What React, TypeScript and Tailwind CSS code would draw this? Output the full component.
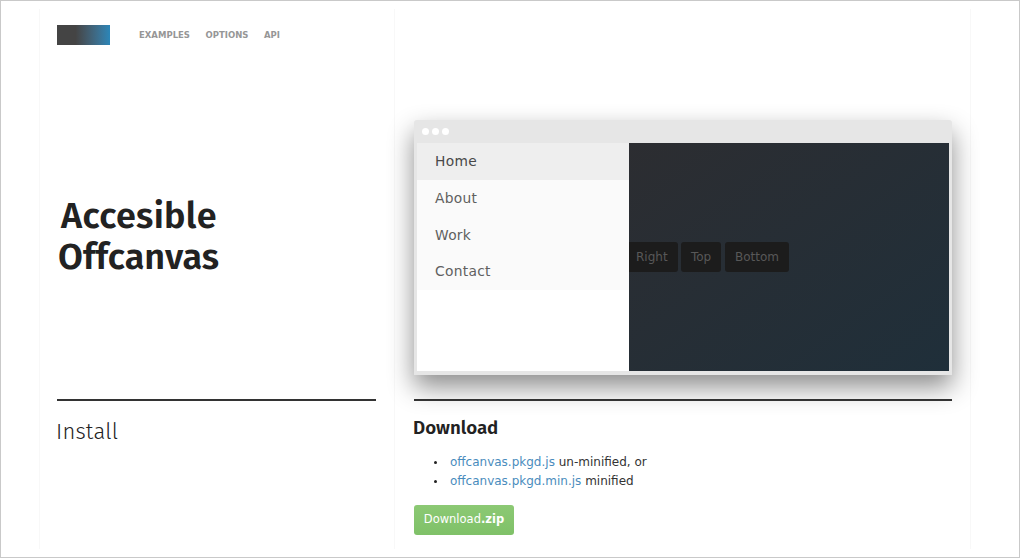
export default function App() {
  const body = { fontFamily: '"DejaVu Sans", sans-serif' };
  const head = { fontFamily: '"Fira Sans", "Noto Sans", "Open Sans", sans-serif' };
  return (
    <div className="w-[1020px] h-[558px] bg-white border border-[#c9c9c9] overflow-hidden" style={body}>
      <div className="ml-[38px] mt-[8px] w-[932px] h-[540px] flex border-x border-[#f8f8f8]">
        <div className="w-[355px] shrink-0 border-r border-[#f8f8f8] pl-[17px] pr-[18px] flex flex-col">
          <div className="flex items-center pt-[16px] h-[36px] shrink-0">
            <div className="w-[53px] h-[20px] bg-gradient-to-r from-[#444444] from-35% to-[#2a86b8]" />
            <div className="ml-[29px] mt-[1px] flex gap-[15.5px] text-[8.5px] font-bold text-[#969696]">
              <span>EXAMPLES</span>
              <span>OPTIONS</span>
              <span>API</span>
            </div>
          </div>
          <div className="flex-1 flex flex-col items-start justify-center pt-[30px]">
            <h1 className="text-[36px] leading-[41px] font-semibold text-[#222222]" style={head}>
              <span className="block ml-[4px] tracking-[0.3px]">Accesible</span>
              <span className="block ml-[1px]">Offcanvas</span>
            </h1>
          </div>
          <div className="border-t-2 border-[#333333] h-[150px] shrink-0 pt-[15px]">
            <h2 className="text-[22px] leading-[32px] -ml-[1px] font-light tracking-[0.2px] text-[#222222]" style={head}>Install</h2>
          </div>
        </div>
        <div className="flex-1 pl-[19px] pr-[18px] flex flex-col">
          <div className="mt-[111px] h-[255px] w-[538px] shrink-0 bg-[#e6e6e6] rounded-t-[3px] flex flex-col shadow-[0_12px_26px_rgba(0,0,0,0.45)]">
            <div className="h-[23px] flex items-center gap-[3px] pl-[8px] shrink-0">
              <span className="w-[7px] h-[7px] rounded-full bg-white" />
              <span className="w-[7px] h-[7px] rounded-full bg-white" />
              <span className="w-[7px] h-[7px] rounded-full bg-white" />
            </div>
            <div className="flex-1 flex mx-[3px] mb-[4px] overflow-hidden">
              <div className="w-[212px] bg-white shrink-0 relative z-10 text-[13.8px] text-[#606060] tracking-[0.3px]">
                <div className="h-[37px] pl-[18px] flex items-center bg-[#eeeeee] text-[#484848]">Home</div>
                <div className="h-[37px] pl-[18px] pb-[1px] flex items-center bg-[#fafafa]">About</div>
                <div className="h-[37px] pl-[18px] flex items-center bg-[#fafafa]">Work</div>
                <div className="h-[36px] pl-[18px] pb-[1px] flex items-center bg-[#fafafa]">Contact</div>
              </div>
              <div className="flex-1 bg-gradient-to-br from-[#2c2d31] to-[#1f2f3a] flex items-center gap-[3px] text-[12px] text-[#585858]">
                <span className="h-[30px] w-[49px] pl-[7px] flex items-center bg-[#1c1c1c] rounded-r-[3px]">Right</span>
                <span className="h-[30px] w-[40px] flex items-center justify-center bg-[#1c1c1c] rounded-[3px]">Top</span>
                <span className="h-[30px] w-[64px] ml-[1px] flex items-center justify-center bg-[#1c1c1c] rounded-[3px]">Bottom</span>
              </div>
            </div>
          </div>
          <div className="mt-[24px] border-t-2 border-[#333333] pt-[14px]">
            <h3 className="text-[18.7px] leading-[26px] -ml-[1px] font-semibold text-[#222222]" style={head}>Download</h3>
            <ul className="mt-[12px] text-[12px] leading-[19px] text-[#333333] pl-[20px]">
              <li className="flex items-center">
                <span className="w-[3px] h-[3px] rounded-full bg-[#222222] mr-[13px]" />
                <span><span className="text-[#4a8cbd]">offcanvas.pkgd.js</span> un-minified, or</span>
              </li>
              <li className="flex items-center">
                <span className="w-[3px] h-[3px] rounded-full bg-[#222222] mr-[13px]" />
                <span><span className="text-[#4a8cbd]">offcanvas.pkgd.min.js</span> minified</span>
              </li>
            </ul>
            <div className="mt-[14px] w-[100px] h-[30px] rounded-[3px] bg-gradient-to-b from-[#8cc974] to-[#7fc168] text-white text-[11.5px] flex items-center justify-center">
              Download<b>.zip</b>
            </div>
          </div>
        </div>
      </div>
    </div>
  );
}
